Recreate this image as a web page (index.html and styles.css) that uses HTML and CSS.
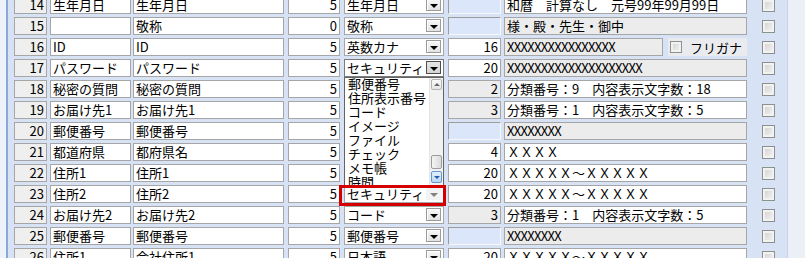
FILE: index.html
```html
<!DOCTYPE html>
<html lang="ja">
<head>
    <meta charset="UTF-8">
    <link rel="stylesheet" href="styles.css">
</head>
<body>
<div class="screen">
    <div class="edge"></div>
    <div class="grid">
        <div class="rows">
            <div class="row">
                <div class="cell num">14</div>
                <div class="cell name1">生年月日</div>
                <div class="cell name2">生年月日</div>
                <div class="cell len">5</div>
                <div class="combo"><span class="combo-text">生年月日</span><span class="drop"></span></div>
                <div class="cell size blank"></div>
                <div class="cell text">和暦　計算なし　元号99年99月99日</div>
                <span class="check"></span>
            </div>
            <div class="row">
                <div class="cell num">15</div>
                <div class="cell name1"></div>
                <div class="cell name2">敬称</div>
                <div class="cell len">0</div>
                <div class="combo"><span class="combo-text">敬称</span><span class="drop"></span></div>
                <div class="cell size blank"></div>
                <div class="cell text gray">様・殿・先生・御中</div>
                <span class="check"></span>
            </div>
            <div class="row">
                <div class="cell num">16</div>
                <div class="cell name1">ID</div>
                <div class="cell name2">ID</div>
                <div class="cell len">5</div>
                <div class="combo"><span class="combo-text">英数カナ</span><span class="drop"></span></div>
                <div class="cell size">16</div>
                <div class="text-split">
                    <div class="cell short gray narrow">XXXXXXXXXXXXXXXX</div>
                    <div class="furi"><span class="check small"></span>フリガナ</div>
                </div>
                <span class="check"></span>
            </div>
            <div class="row">
                <div class="cell num">17</div>
                <div class="cell name1">パスワード</div>
                <div class="cell name2">パスワード</div>
                <div class="cell len">5</div>
                <div class="combo open"><span class="combo-text">セキュリティ</span><span class="drop pressed"></span></div>
                <div class="cell size">20</div>
                <div class="cell text gray narrow">XXXXXXXXXXXXXXXXXXXX</div>
                <span class="check"></span>
            </div>
            <div class="row">
                <div class="cell num">18</div>
                <div class="cell name1">秘密の質問</div>
                <div class="cell name2">秘密の質問</div>
                <div class="cell len">5</div>
                <div class="combo"><span class="combo-text"></span><span class="drop"></span></div>
                <div class="cell size gray">2</div>
                <div class="cell text">分類番号：9　内容表示文字数：18</div>
                <span class="check"></span>
            </div>
            <div class="row">
                <div class="cell num">19</div>
                <div class="cell name1">お届け先1</div>
                <div class="cell name2">お届け先1</div>
                <div class="cell len">5</div>
                <div class="combo"><span class="combo-text"></span><span class="drop"></span></div>
                <div class="cell size gray">3</div>
                <div class="cell text">分類番号：1　内容表示文字数：5</div>
                <span class="check"></span>
            </div>
            <div class="row">
                <div class="cell num">20</div>
                <div class="cell name1">郵便番号</div>
                <div class="cell name2">郵便番号</div>
                <div class="cell len">5</div>
                <div class="combo"><span class="combo-text"></span><span class="drop"></span></div>
                <div class="cell size blank"></div>
                <div class="cell text gray narrow">XXXXXXXX</div>
                <span class="check"></span>
            </div>
            <div class="row">
                <div class="cell num">21</div>
                <div class="cell name1">都道府県</div>
                <div class="cell name2">都府県名</div>
                <div class="cell len">5</div>
                <div class="combo"><span class="combo-text"></span><span class="drop"></span></div>
                <div class="cell size">4</div>
                <div class="cell text">ＸＸＸＸ</div>
                <span class="check"></span>
            </div>
            <div class="row">
                <div class="cell num">22</div>
                <div class="cell name1">住所1</div>
                <div class="cell name2">住所1</div>
                <div class="cell len">5</div>
                <div class="combo"><span class="combo-text"></span><span class="drop"></span></div>
                <div class="cell size">20</div>
                <div class="cell text">ＸＸＸＸＸ～ＸＸＸＸＸ</div>
                <span class="check"></span>
            </div>
            <div class="row">
                <div class="cell num">23</div>
                <div class="cell name1">住所2</div>
                <div class="cell name2">住所2</div>
                <div class="cell len">5</div>
                <div class="combo"><span class="combo-text">セキュリティ</span><span class="drop flat"></span></div>
                <div class="cell size">20</div>
                <div class="cell text">ＸＸＸＸＸ～ＸＸＸＸＸ</div>
                <span class="check"></span>
            </div>
            <div class="row">
                <div class="cell num">24</div>
                <div class="cell name1">お届け先2</div>
                <div class="cell name2">お届け先2</div>
                <div class="cell len">5</div>
                <div class="combo"><span class="combo-text">コード</span><span class="drop"></span></div>
                <div class="cell size gray">3</div>
                <div class="cell text">分類番号：1　内容表示文字数：5</div>
                <span class="check"></span>
            </div>
            <div class="row">
                <div class="cell num">25</div>
                <div class="cell name1">郵便番号</div>
                <div class="cell name2">郵便番号</div>
                <div class="cell len">5</div>
                <div class="combo"><span class="combo-text">郵便番号</span><span class="drop"></span></div>
                <div class="cell size blank"></div>
                <div class="cell text gray narrow">XXXXXXXX</div>
                <span class="check"></span>
            </div>
            <div class="row">
                <div class="cell num">26</div>
                <div class="cell name1">住所1</div>
                <div class="cell name2">会社住所1</div>
                <div class="cell len">5</div>
                <div class="combo"><span class="combo-text">日本語</span><span class="drop"></span></div>
                <div class="cell size">20</div>
                <div class="cell text">ＸＸＸＸＸ～ＸＸＸＸＸ</div>
                <span class="check"></span>
            </div>
        </div>

        <!-- open list of the row 17 combo -->
        <div class="droplist">
            <div class="items">
                <div>郵便番号</div>
                <div>住所表示番号</div>
                <div>コード</div>
                <div>イメージ</div>
                <div>ファイル</div>
                <div>チェック</div>
                <div>メモ帳</div>
                <div>時間</div>
            </div>
            <div class="vscroll">
                <span class="sb-up"></span>
                <span class="sb-thumb"></span>
                <span class="sb-down"></span>
            </div>
        </div>

        <div class="mark"></div>
    </div>
    <div class="side"></div>
</div>
</body>
</html>
```

FILE: styles.css
```css
body {
    margin: 0;
    height: 258px;
    overflow: hidden;
    background-color: #d8e2f5;
    font-family: "Noto Sans CJK JP", "Liberation Sans", sans-serif;
    font-size: 13px;
    color: #000;
}
.screen {
    display: flex;
    height: 258px;
}
.edge {
    width: 6px;
    background-color: #eef2fa;
    border-right: 2px solid #8aa8da;
}
.grid {
    position: relative;
    width: 779px;
    overflow: hidden;
}
.side {
    flex: 1;
    background-color: #eceff5;
    border-left: 1px solid #c8d2e4;
}
.rows {
    display: flex;
    flex-direction: column;
    gap: 3px;
    margin-top: -4px;
    padding-left: 6px;
}
.row {
    display: flex;
    align-items: center;
    height: 18px;
}

/* plain input boxes */
.cell {
    box-sizing: border-box;
    height: 18px;
    border: 1px solid #a6a6a6;
    background-color: #fff;
    line-height: 16px;
    padding: 0 2px;
    white-space: nowrap;
    overflow: hidden;
}
.num {
    width: 33px;
    margin-right: 3px;
    text-align: right;
    background-color: #efefef;
}
.name1 {
    width: 81px;
    margin-right: 2px;
}
.name2 {
    width: 151px;
    margin-right: 4px;
}
.len {
    width: 52px;
    margin-right: 4px;
    text-align: right;
}
.size {
    width: 53px;
    margin-right: 3px;
    text-align: right;
}
.text {
    width: 243px;
    margin-right: 15px;
}
.gray {
    background-color: #ececec;
}
.narrow {
    letter-spacing: -0.7px;
}
.blank {
    background-color: #dce6fa;
    border-color: #9c9c9c #f6f8fc #f6f8fc #9c9c9c;
}

.text-split {
    display: flex;
    width: 243px;
    margin-right: 15px;
}
.short {
    width: 159px;
}
.furi {
    display: flex;
    align-items: center;
    gap: 8px;
    margin-left: 5px;
    padding-left: 2px;
    width: 77px;
    height: 18px;
    background-color: #e9ebef;
}

/* combo boxes */
.combo {
    box-sizing: border-box;
    display: flex;
    width: 100px;
    height: 18px;
    margin-right: 4px;
    border: 1px solid #a6a6a6;
    background-color: #fff;
}
.combo-text {
    flex: 1;
    line-height: 16px;
    padding-left: 2px;
    white-space: nowrap;
    overflow: hidden;
}
.drop {
    box-sizing: border-box;
    display: flex;
    align-items: center;
    justify-content: center;
    width: 15px;
    height: 13px;
    margin: 1px 2px 0 0;
    border: 1px solid #9a9a9a;
    background: linear-gradient(#f8f8f8, #e2e2e2);
    box-shadow: inset 1px 1px #fff;
}
.drop::after {
    content: "";
    border-top: 4px solid #000;
    border-left: 4px solid transparent;
    border-right: 4px solid transparent;
    margin-top: 2px;
}
.open {
    border-color: #7a7a7a;
}
.drop.pressed {
    border-color: #4d4d4d;
    background: linear-gradient(#e6e6e6, #d4d4d4);
    box-shadow: none;
}
.drop.flat {
    border-color: transparent;
    background: #f3f3f3;
    box-shadow: none;
}
.drop.flat::after {
    border-top-color: #808080;
}

/* checkboxes */
.check {
    box-sizing: border-box;
    width: 13px;
    height: 13px;
    border: 1px solid #8e8f8f;
    background: linear-gradient(135deg, #cfcfcf, #f6f6f6);
    box-shadow: inset 0 0 0 2px #f2f2f2;
}
.check.small {
    width: 12px;
    height: 12px;
}

/* dropdown list over rows 18 - 22 */
.droplist {
    position: absolute;
    left: 336px;
    top: 77px;
    box-sizing: border-box;
    width: 100px;
    height: 109px;
    border: 1px solid #646464;
    background-color: #fff;
    overflow: hidden;
}
.items {
    margin-top: -1px;
    padding-left: 3px;
    line-height: 14px;
    white-space: nowrap;
}
.vscroll {
    position: absolute;
    top: 0;
    right: 0;
    bottom: 0;
    width: 13px;
    background-color: #f1f1f1;
    border-left: 1px solid #e4e4e4;
}
.sb-up,
.sb-thumb,
.sb-down {
    position: absolute;
    left: 1px;
    box-sizing: border-box;
    width: 11px;
    border: 1px solid #b4b4b4;
    border-radius: 2px;
    display: flex;
    align-items: center;
    justify-content: center;
}
.sb-up {
    top: 1px;
    height: 11px;
    background: linear-gradient(#fbfbfb, #e6e6e6);
}
.sb-up::after {
    content: "";
    border-bottom: 3px solid #6a6a6a;
    border-left: 3px solid transparent;
    border-right: 3px solid transparent;
}
.sb-thumb {
    top: 77px;
    height: 14px;
    background: linear-gradient(90deg, #f4f4f4, #dadada);
    border-color: #9c9c9c;
}
.sb-down {
    top: 93px;
    height: 12px;
    background: linear-gradient(#e4f1fd, #b9d8f6);
    border-color: #5f97d4;
}
.sb-down::after {
    content: "";
    border-top: 3px solid #1f5ea8;
    border-left: 3px solid transparent;
    border-right: 3px solid transparent;
}

/* red highlight round the row 23 combo */
.mark {
    position: absolute;
    left: 331px;
    top: 185px;
    box-sizing: border-box;
    width: 107px;
    height: 21px;
    border: 3px solid #d40000;
}
```
